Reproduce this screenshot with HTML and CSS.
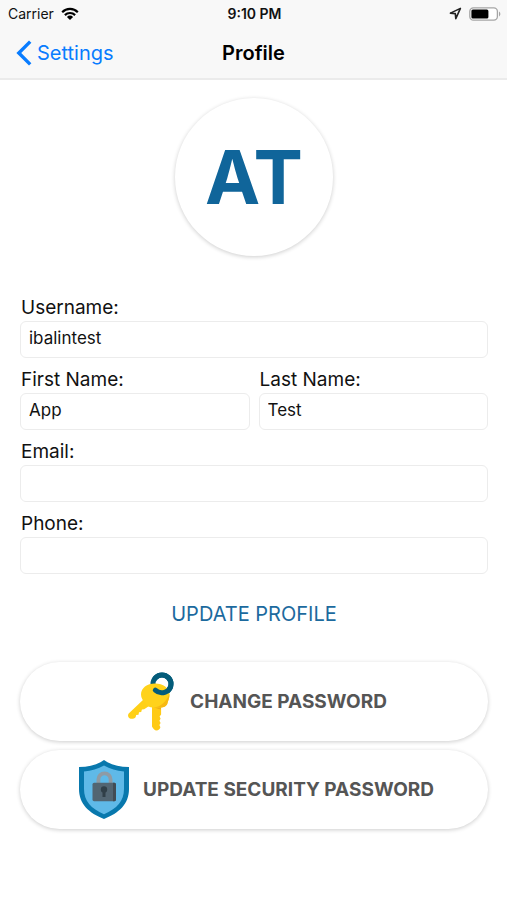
FILE: index.html
```html
<!DOCTYPE html>
<html lang="en">
<head>
<meta charset="utf-8">
<meta name="viewport" content="width=device-width, initial-scale=1">
<title>Profile</title>
<link rel="stylesheet" href="styles.css">
</head>
<body>
<header class="top">
  <div class="status">
    <div class="carrier">
      <span>Carrier</span>
      <svg class="wifi" width="18" height="14" viewBox="0 0 18 14" fill="none" stroke="#000" stroke-width="2.2" aria-hidden="true">
        <path d="M1.2 5.2a11 11 0 0 1 15.6 0M3.9 8.1a7.2 7.2 0 0 1 10.2 0"/>
        <path d="M9 13 5.9 9.9a4.4 4.4 0 0 1 6.2 0z" fill="#000" stroke="none"/>
      </svg>
    </div>
    <time class="clock">9:10 PM</time>
    <div class="indicators">
      <svg width="13" height="13" viewBox="0 0 13 13" fill="none" stroke="#222" stroke-width="1.6" stroke-linejoin="round" aria-hidden="true">
        <path d="M11.4 1.4 1.4 6.1 6.3 6.6 6.8 11.6z"/>
      </svg>
      <svg width="32" height="14" viewBox="0 0 32 14" aria-hidden="true">
        <rect x=".8" y=".8" width="27.6" height="12.4" rx="3.6" fill="#fff" stroke="#a5a5a5" stroke-width="1.3"/>
        <path d="M30 4.6c1.8.7 1.8 4.1 0 4.8z" fill="#a5a5a5"/>
        <rect x="2.4" y="2.4" width="17" height="9.2" rx="1.5"/>
      </svg>
    </div>
  </div>
  <nav class="nav">
    <a class="back" href="#settings">
      <svg width="16" height="26" viewBox="0 0 16 26" fill="none" stroke="#087cff" stroke-width="3.4" aria-hidden="true"><path d="M14.2 1.6 2.8 13l11.4 11.4"/></svg>
      <span>Settings</span>
    </a>
    <h1 class="title">Profile</h1>
  </nav>
</header>
<main class="content">
  <div class="avatar">AT</div>
  <form class="form">
    <div class="field">
      <label for="username">Username:</label>
      <input id="username" type="text" value="ibalintest">
    </div>
    <div class="pair">
      <div class="field">
        <label for="first">First Name:</label>
        <input id="first" type="text" value="App">
      </div>
      <div class="field">
        <label for="last">Last Name:</label>
        <input id="last" type="text" value="Test">
      </div>
    </div>
    <div class="field">
      <label for="email">Email:</label>
      <input id="email" type="email">
    </div>
    <div class="field">
      <label for="phone">Phone:</label>
      <input id="phone" type="tel">
    </div>
    <button class="update" type="submit">UPDATE PROFILE</button>
  </form>
  <div class="actions">
    <button class="action" type="button">
      <svg width="60" height="60" viewBox="0 0 60 60" aria-hidden="true">
        <circle cx="41" cy="12" r="9" fill="none" stroke="#045c7a" stroke-width="5"/>
        <path d="M23 27 7.7 41.5c-1.5 2-.2 5 2 5.2 2 .2 3.8-.2 4.9-1.5l.6-2.3 2.3-.2.5-2.5 2.2-.3.7-2.5 2.3-.2L31 32z" fill="#ffd018"/>
        <path d="M31 33v21.500c1 2.300 2.800 4 4.500 4 1.900 0 3.500-1.300 3.900-3.200l-1-2.300 1.200-2-1.200-2.200 1.200-2-1-2.200 1.500-2V33z" fill="#ffca16"/>
        <path d="M31 34c3 1.600 6 1.600 9 0v3.500c-3-.8-6-1.300-9-3.500z" fill="#efae16"/>
        <path d="M34 11.500c8 0 14.500 4.500 14.500 11 0 4-1.500 6.300-2 8.500-.7 3.300-3.500 4.500-7.500 4.500H32c-3.500 0-6-1.500-7.500-4.500-2.500-2.200-4.500-5-4.500-8.500 0-6.500 6-11 14-11z" fill="#ffd21b"/>
        <path d="M48.500 22c0 4.200-1.500 6.500-2 9-.7 3.300-3.500 4.500-7.500 4.500h-6c7-1 11.500-5 15.500-13.500z" fill="#f7b914"/>
        <path d="M34.300 18.200C40 23.500 50 20 50 12a9 9 0 0 0-9-9c-2.700 0-5 1-6.700 3" fill="none" stroke="#045c7a" stroke-width="5" stroke-linecap="round"/>
      </svg>
      <span>CHANGE PASSWORD</span>
    </button>
    <button class="action" type="button">
      <svg width="60" height="60" viewBox="0 0 60 60" aria-hidden="true">
        <path d="M30 0C23 5 15 7 5 7v22C5 44 15 53 30 59c15-6 25-15 25-30V7C45 7 37 5 30 0z" fill="#0878ad"/>
        <path d="M30 5.500C24 9 17.500 11 10 11.400V29c0 12 7 19.500 20 25.200C43 48.500 50 41 50 29V11.400C42.500 11 36 9 30 5.500z" fill="#5fb9e8"/>
        <path d="M24.400 24v-4.500a6.100 6.100 0 0 1 12.200 0V24" fill="none" stroke="#8e9ba5" stroke-width="3.8"/>
        <rect x="18.500" y="22.800" width="23.500" height="18.400" rx="1.600" fill="#526572"/>
        <path d="M39 22.800h1.400a1.600 1.600 0 0 1 1.600 1.600v15.200a1.600 1.600 0 0 1-1.600 1.600H39z" fill="#424c55"/>
        <circle cx="30" cy="29.400" r="3.200" fill="#303f48"/>
        <path d="M28.500 30h3v7h-3z" fill="#303f48"/>
      </svg>
      <span>UPDATE SECURITY PASSWORD</span>
    </button>
  </div>
</main>
</body>
</html>
```
FILE: styles.css
```css
* {
  box-sizing: border-box;
}

body {
  margin: 0;
  min-height: 100vh;
  background: #fff;
  color: #111;
  font-family: Inter, "Liberation Sans", sans-serif;
}

button,
input {
  font-family: inherit;
}

svg {
  display: block;
  flex: none;
}

.top {
  background: #f8f8f8;
  border-bottom: 2px solid #ebebeb;
}

.status,
.nav {
  display: grid;
  grid-template-columns: 1fr auto 1fr;
  align-items: center;
}

.status {
  height: 27px;
  padding: 0 6px 0 8px;
  font-size: 14px;
}

.carrier,
.indicators {
  display: flex;
  align-items: center;
  gap: 7px;
}

.indicators {
  justify-content: flex-end;
}

.clock {
  font-weight: 600;
}

.nav {
  height: 51px;
  padding: 0 16px;
}

.back {
  display: flex;
  align-items: center;
  gap: 5px;
  color: #087cff;
  font-size: 20px;
  text-decoration: none;
}

.title {
  margin: 0;
  color: #000;
  font-size: 20px;
  font-weight: 600;
}

.content {
  padding: 18px 19px 18px 20px;
}

.avatar {
  display: flex;
  align-items: center;
  justify-content: center;
  width: 158px;
  height: 158px;
  margin: 0 auto 38px;
  border-radius: 50%;
  box-shadow: 0 1px 4px rgba(0, 0, 0, 0.2);
  color: #10659a;
  font-size: 74px;
  font-weight: 700;
}

.form {
  display: flex;
  flex-direction: column;
  gap: 8px;
}

.field {
  display: flex;
  flex-direction: column;
  min-width: 0;
}

.field label {
  padding-left: 1px;
  font-size: 19px;
  line-height: 27px;
}

.field input {
  width: 100%;
  height: 37px;
  padding: 0 8px 3px;
  border: 1px solid #ececec;
  border-radius: 6px;
  background: #fff;
  color: #111;
  font-size: 17px;
}

.pair {
  display: grid;
  grid-template-columns: 1fr 1fr;
  gap: 9px;
}

.update {
  align-self: center;
  margin-top: 16px;
  padding: 0;
  border: 0;
  background: none;
  color: #1c6a9e;
  font-size: 20px;
  line-height: 32px;
}

.actions {
  display: flex;
  flex-direction: column;
  gap: 9px;
  margin-top: 32px;
}

.action {
  display: flex;
  align-items: center;
  justify-content: center;
  gap: 9px;
  width: 100%;
  min-height: 79px;
  padding: 9px 16px;
  border: 0;
  border-radius: 40px;
  background: #fff;
  box-shadow: 0 1px 4px rgba(0, 0, 0, 0.2);
  color: #555;
  font-size: 19px;
  font-weight: 700;
}
```
